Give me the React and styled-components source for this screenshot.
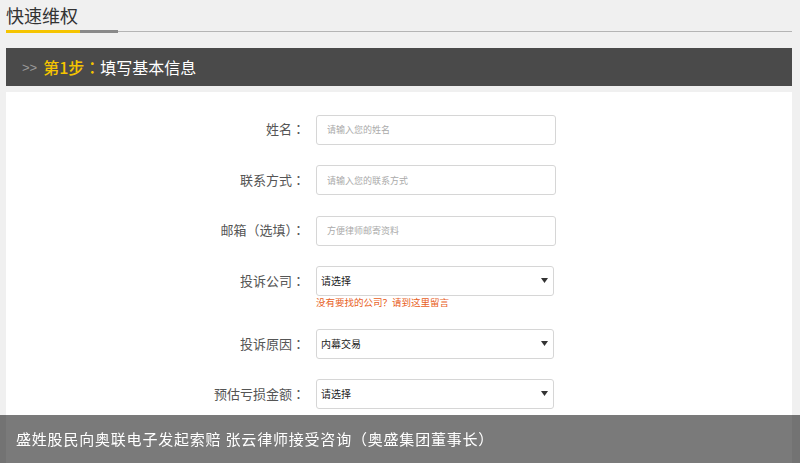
import styled, { createGlobalStyle } from "styled-components";

const GlobalStyle = createGlobalStyle`
  html, body {
    margin: 0;
    padding: 0;
    background: #f0f0f0;
    font-family: "Noto Sans CJK SC", "Noto Sans", sans-serif;
  }
`;

const fields = [
  { label: "姓名", type: "input", placeholder: "请输入您的姓名" },
  { label: "联系方式", type: "input", placeholder: "请输入您的联系方式" },
  { label: "邮箱（选填）", type: "input", placeholder: "方便律师邮寄资料" },
  { label: "投诉公司", type: "select", value: "请选择", hint: "没有要找的公司？请到这里留言" },
  { label: "投诉原因", type: "select", value: "内幕交易" },
  { label: "预估亏损金额", type: "select", value: "请选择" },
];

export default function App() {
  return (
    <Page>
      <GlobalStyle />
      <TitleBar>
        <Title>快速维权</Title>
        <GrayTab />
        <TitleLine />
      </TitleBar>
      <StepHeader>
        <Arrows>&gt;&gt;</Arrows>
        <StepNo>
          第1步<Colon>：</Colon>
        </StepNo>
        填写基本信息
      </StepHeader>
      <Panel>
        {fields.map((f) => (
          <Row key={f.label}>
            <Label>
              {f.label}
              <Colon>：</Colon>
            </Label>
            <div>
              {f.type === "input" ? (
                <TextInput placeholder={f.placeholder} />
              ) : (
                <SelectBox>
                  <span>{f.value}</span>
                  <svg width="7" height="5" viewBox="0 0 7 5">
                    <path d="M0 0h7L3.5 5z" fill="#333" />
                  </svg>
                </SelectBox>
              )}
              {f.hint && <Hint>{f.hint}</Hint>}
            </div>
          </Row>
        ))}
      </Panel>
      <NewsBar>盛姓股民向奥联电子发起索赔 张云律师接受咨询（奥盛集团董事长）</NewsBar>
    </Page>
  );
}

const Page = styled.div`
  padding: 0 8px 0 6px;
  height: 463px;
  overflow: hidden;
`;

const TitleBar = styled.div`
  display: flex;
  align-items: flex-end;
  height: 33px;
`;

const Title = styled.h2`
  margin: 0;
  width: 74px;
  font-size: 18px;
  font-weight: 400;
  line-height: 24px;
  color: #333;
  padding-bottom: 3px;
  border-bottom: 3px solid #f5c400;
  white-space: nowrap;
`;

const GrayTab = styled.span`
  width: 38px;
  height: 3px;
  background: #8a8a8a;
`;

const TitleLine = styled.span`
  flex: 1;
  height: 1px;
  margin-bottom: 1px;
  background: #b4b4b4;
`;

const StepHeader = styled.div`
  margin-top: 15px;
  height: 38px;
  background: #4a4a4a;
  display: flex;
  align-items: center;
  padding-left: 16px;
  font-size: 16px;
  color: #fff;
`;

const Arrows = styled.span`
  font-family: "Liberation Sans", sans-serif;
  font-size: 13px;
  color: #9a9a9a;
  margin-right: 6px;
`;

const StepNo = styled.span`
  color: #f5c400;
  font-weight: 500;
`;

const Colon = styled.span`
  font-family: "Noto Sans CJK TC", sans-serif;
`;

const Panel = styled.div`
  margin-top: 6px;
  background: #fff;
  padding-top: 22px;
  height: 400px;
  display: flex;
  flex-direction: column;
  gap: 20px;
`;

const Row = styled.div`
  display: grid;
  grid-template-columns: 299px 240px;
  column-gap: 11px;
  align-items: start;
`;

const Label = styled.label`
  height: 30px;
  line-height: 30px;
  text-align: right;
  font-size: 13px;
  color: #555;
  white-space: nowrap;
`;

const TextInput = styled.input`
  box-sizing: border-box;
  width: 240px;
  height: 30px;
  border: 1px solid #d6d6d6;
  border-radius: 3px;
  padding: 0 10px;
  font-family: inherit;
  font-size: 9px;
  outline: none;

  &::placeholder {
    color: #aaa;
  }
`;

const SelectBox = styled.div`
  box-sizing: border-box;
  width: 238px;
  height: 30px;
  border: 1px solid #d6d6d6;
  border-radius: 3px;
  padding: 0 5px 0 4px;
  display: flex;
  align-items: center;
  justify-content: space-between;
  font-size: 10px;
  color: #222;
`;

const Hint = styled.div`
  margin-top: 1px;
  height: 12px;
  line-height: 11px;
  font-size: 9.5px;
  color: #e8601c;
  white-space: nowrap;
`;

const NewsBar = styled.div`
  position: fixed;
  left: 0;
  right: 0;
  bottom: 0;
  height: 48px;
  line-height: 48px;
  padding-left: 16px;
  background: rgba(0, 0, 0, 0.52);
  color: #fff;
  font-size: 15px;
  letter-spacing: 0.8px;
  white-space: nowrap;
`;
